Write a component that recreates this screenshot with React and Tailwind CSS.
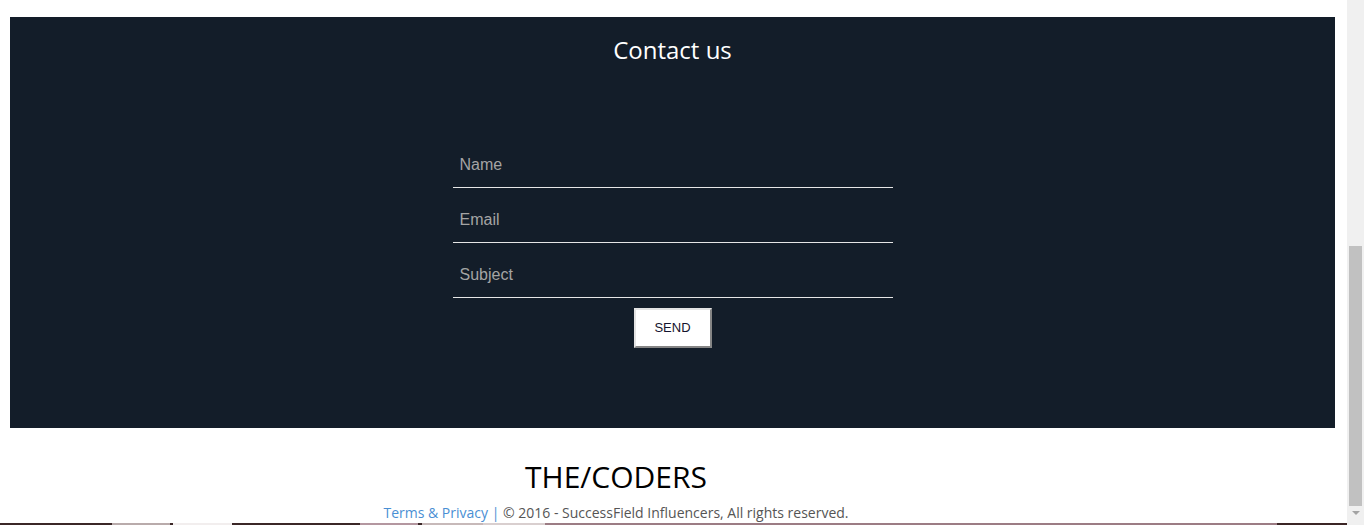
import React from 'react';

const fields = ['Name', 'Email', 'Subject'];

const strip = [
    ['w-[112px]', 'bg-[#3b2727]'],
    ['w-[58px]', 'bg-[#b9abab]'],
    ['w-[3px]', 'bg-[#3b2727]'],
    ['w-[59px]', 'bg-[#f2eeee]'],
    ['w-[128px]', 'bg-[#3b2727]'],
    ['w-[58px]', 'bg-[#b497a0]'],
    ['w-[4px]', 'bg-[#3b2727]'],
    ['w-[61px]', 'bg-[#c7b9b9]'],
    ['w-[62px]', 'bg-[#d9cfcf]'],
    ['w-[732px]', 'bg-[#9c7c84]'],
    ['flex-1', 'bg-[#3b2525]'],
];

const App = () => {
    return (
        <div className="w-[1364px] h-[525px] flex bg-white overflow-hidden">
            <div className="w-[1347px] flex flex-col">
                <section className="ml-[10px] mr-[12px] mt-[17px] h-[411px] bg-[#131d29] pt-[20px] flex flex-col items-center font-['Open_Sans',sans-serif]">
                    <h2 className="text-white text-[24px] leading-[26px]">Contact us</h2>

                    <form className="mt-[79px] w-[440px] flex flex-col gap-[9px]" onSubmit={(e) => e.preventDefault()}>
                        {fields.map((f) => (
                            <input
                                key={f}
                                type="text"
                                placeholder={f}
                                className="h-[46px] w-full bg-transparent border-b border-[#e6e6e6] pl-[7px] text-white text-[16px] font-['Liberation_Sans',Arial,sans-serif] placeholder:text-[#a4a4a4] outline-none"
                            />
                        ))}
                        <button
                            type="submit"
                            className="self-center mt-[1px] w-[78px] h-[40px] bg-white border-2 border-t-[#e3e3e3] border-l-[#e3e3e3] border-r-[#858585] border-b-[#858585] text-[13px] text-[#14142e] font-['Liberation_Sans',Arial,sans-serif]"
                        >
                            SEND
                        </button>
                    </form>
                </section>

                <footer className="flex-1 flex flex-col items-center pr-[115px] font-['Open_Sans',sans-serif]">
                    <div className="mt-[32px] text-[30px] leading-[33px] text-black">THE/CODERS</div>
                    <p className="mt-[10px] text-[14px] leading-[20px] text-[#555]">
                        <a href="#" className="text-[#4a8fd4]">Terms &amp; Privacy |</a> © 2016 - SuccessField Influencers, All rights reserved.
                    </p>
                </footer>

                <div className="h-[2px] flex">
                    {strip.map(([w, c], i) => (
                        <div key={i} className={`${w} ${c}`} />
                    ))}
                </div>
            </div>

            {/* scrollbar */}
            <div className="w-[17px] h-full bg-[#f0f0f0] flex flex-col items-center">
                <div className="mt-[246px] w-[13px] h-[260px] bg-[#c1c1c1]" />
                <div className="mt-[5px] w-0 h-0 border-l-[4px] border-r-[4px] border-t-[4px] border-l-transparent border-r-transparent border-t-[#a3a3a3]" />
            </div>
        </div>
    );
};

export default App;
